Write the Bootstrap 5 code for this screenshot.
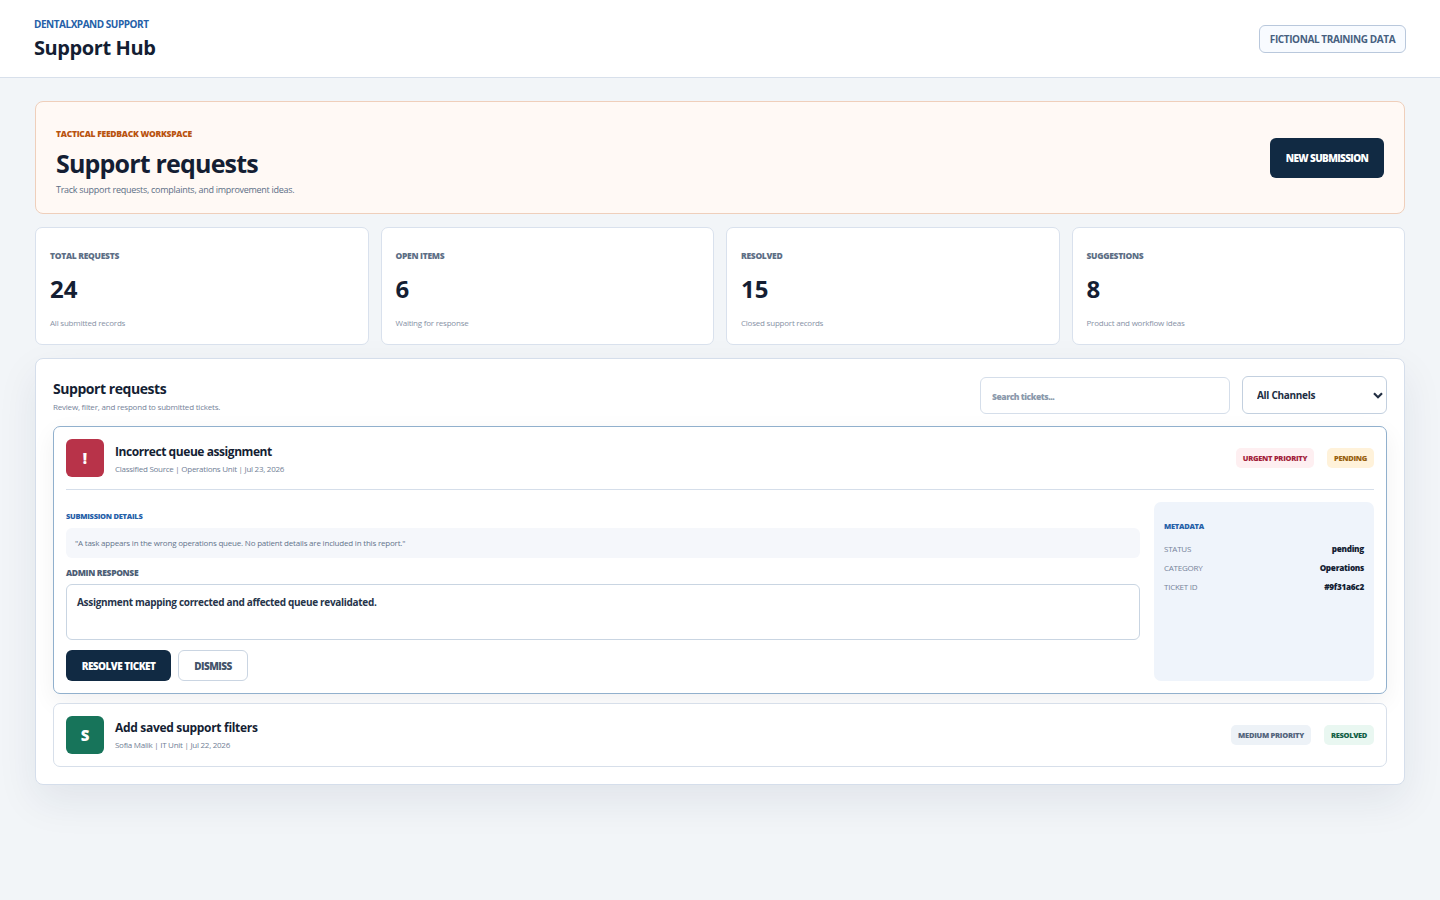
<!DOCTYPE html>
<html lang="en">
<head>
<meta charset="utf-8">
<meta name="viewport" content="width=device-width, initial-scale=1">
<title>Support Hub</title>
<link href="https://cdn.jsdelivr.net/npm/bootstrap@5.3.0/dist/css/bootstrap.min.css" rel="stylesheet">
<style>
body{font-family:"Open Sans","Noto Sans",sans-serif;background:#f2f5f8;color:#141e33;min-height:100vh;font-size:8px;line-height:12px}
h1,h2,h3,p{margin:0;white-space:nowrap}
.topbar{height:78px;background:#fff;border-bottom:1px solid #d8e0eb;padding:17px 34px 0}
.brand-kicker{font-size:10px;line-height:14px;font-weight:700;letter-spacing:-.047em;color:#2560a8}
.brand-title{font-size:20px;line-height:28px;font-weight:700;letter-spacing:-.02em;margin-top:3px}
.pill{margin-top:8px;width:147px;height:28px;line-height:27px;border:1px solid #b9c8dc;border-radius:6px;background:#f8fbff;color:#476080;font-size:10px;font-weight:700;letter-spacing:-.04em;white-space:nowrap;text-align:center}
.workspace{padding:23px 35px 0}
.hero{height:113px;background:#fff9f5;border:1px solid #efcfbb;border-radius:8px;padding:0 20px}
.hero-copy{padding-top:26px}
.hero-kicker{font-size:8.5px;font-weight:800;letter-spacing:-.031em;color:#b9530f}
.hero h1{font-size:25px;line-height:32px;font-weight:700;letter-spacing:-.0325em;margin-top:7px}
.hero-sub{font-size:9px;line-height:14px;letter-spacing:-.031em;color:#5c6e85;margin-top:4px}
.act{display:inline-flex;align-items:center;justify-content:center;padding:0;border-radius:6px;font-size:10px;line-height:14px;font-weight:800;letter-spacing:-.052em;white-space:nowrap}
.act-dark,.act-dark:hover{background:#112a43;color:#fff}
.act-new{width:114px;height:40px;letter-spacing:-.0635em;margin-top:1px}
.act-resolve{width:105px;height:31px}
.act-dismiss,.act-dismiss:hover{width:70px;height:31px;background:#fff;border:1px solid #cad5e2;color:#44546a;letter-spacing:-.055em}
.stats{display:grid;grid-template-columns:repeat(4,1fr);gap:12px;margin-top:13px}
.stat{height:118px;background:#fff;border:1px solid #d9e1ed;border-radius:7px;padding:22px 14px 0}
.stat-label{font-size:8.5px;font-weight:800;letter-spacing:-.036em;color:#5c6e85}
.stat-num{font-size:24px;line-height:30px;font-weight:700;margin-top:12px}
.stat-sub{letter-spacing:-.0275em;color:#8792a6;margin-top:13px}
.panel{margin-top:13px;background:#fff;border:1px solid #d5deeb;border-radius:8px;padding:17px;box-shadow:0 16px 40px rgba(30,41,75,.08)}
.panel-head{height:38px;margin-bottom:12px;gap:12px}
.panel h2{font-size:14px;line-height:20px;font-weight:700;letter-spacing:-.032em;margin-top:3px}
.panel-sub{letter-spacing:-.026em;color:#76839a;margin-top:2px}
.controls{gap:12px}
.search{width:250px;height:37px;margin-top:1px;border:1px solid #d5deea;border-radius:6px;padding:2px 11px 0;font-size:8.5px;line-height:14px;font-weight:800;letter-spacing:-.052em;background:#fff}
.search::placeholder{color:#8b99ac;opacity:1}
.channels{width:145px;height:38px;border:1px solid #c3d0df;border-radius:6px;padding:0 14px;font-size:10px;line-height:14px;font-weight:700;letter-spacing:-.03em;color:#202e43;background:#fff url("data:image/svg+xml,%3Csvg xmlns='http://www.w3.org/2000/svg' viewBox='0 0 10 7'%3E%3Cpath d='M1 1.2l4 4 4-4' fill='none' stroke='%23243044' stroke-width='2.2'/%3E%3C/svg%3E") no-repeat right 3px top 15px/10px 7px}
.ticket{background:#fff;border:1px solid #d7dfea;border-radius:7px;padding:12px}
.ticket + .ticket{margin-top:9px}
.ticket-open{border-color:#91b0cd;box-shadow:0 8px 24px rgba(15,23,42,.06)}
.avatar{width:38px;height:38px;line-height:39px;border-radius:6px;color:#fff;font-size:15px;font-weight:800;text-align:center;margin-right:11px}
.red{background:#b83349}
.green{background:#17745a}
.ticket h3{font-size:12px;line-height:18px;font-weight:700;letter-spacing:-.036em;padding-top:4px}
.ticket-meta{letter-spacing:-.033em;color:#718096;margin-top:2px}
.ticket:not(.ticket-open) h3{padding-top:3px;letter-spacing:-.026em}
.chip{height:20px;line-height:20px;border-radius:5px;font-size:7.5px;font-weight:800;letter-spacing:-.036em;text-align:center;white-space:nowrap}
.chip-urgent{width:78px;background:#feeff1;color:#a31f3c}
.chip-pending{width:47px;background:#fff2da;color:#99610f}
.chip-medium{width:80px;background:#edf2f7;color:#53647c}
.chip-done{width:50px;background:#e9f7f1;color:#126046;letter-spacing:-.045em}
.ticket-body{border-top:1px solid #d5deea;margin-top:12px;padding-top:12px;gap:14px}
.kicker{font-size:7.5px;font-weight:800;letter-spacing:-.035em;color:#2560a8}
.quote{height:30px;line-height:30px;margin-top:6px;background:#f5f7fb;border-radius:6px;padding-left:9px;letter-spacing:-.025em;color:#64748b}
.field-label{display:block;font-size:8.5px;font-weight:800;letter-spacing:-.04em;color:#4c5d74;margin-top:9px}
.reply{display:block;width:100%;height:56px;margin-top:5px;border:1px solid #c9d5e2;border-radius:6px;padding:10px;font-size:10px;line-height:14px;font-weight:700;letter-spacing:-.0307em;color:#26344a;resize:none}
.reply-actions{gap:7px;margin-top:10px}
.facts{width:220px;background:#eff4fb;border-radius:7px;padding:18px 10px 0}
.facts dl{margin:7px 0 0;line-height:19px}
.facts dt{font-weight:400;letter-spacing:-.03em;color:#76839a}
.facts dd{margin:0;font-size:8.2px;font-weight:800;letter-spacing:-.034em}
.chips{gap:13px}
</style>
</head>
<body>
<header class="topbar d-flex justify-content-between align-items-start">
  <div>
    <p class="brand-kicker">DENTALXPAND SUPPORT</p>
    <p class="brand-title">Support Hub</p>
  </div>
  <span class="pill">FICTIONAL TRAINING DATA</span>
</header>
<main class="workspace">
  <section class="hero d-flex justify-content-between">
    <div class="hero-copy">
      <p class="hero-kicker">TACTICAL FEEDBACK WORKSPACE</p>
      <h1>Support requests</h1>
      <p class="hero-sub">Track support requests, complaints, and improvement ideas.</p>
    </div>
    <button type="button" class="btn act act-dark act-new border-0 align-self-center">NEW SUBMISSION</button>
  </section>
  <section class="stats">
    <div class="stat"><p class="stat-label">TOTAL REQUESTS</p><p class="stat-num">24</p><p class="stat-sub">All submitted records</p></div>
    <div class="stat"><p class="stat-label">OPEN ITEMS</p><p class="stat-num">6</p><p class="stat-sub">Waiting for response</p></div>
    <div class="stat"><p class="stat-label">RESOLVED</p><p class="stat-num">15</p><p class="stat-sub">Closed support records</p></div>
    <div class="stat"><p class="stat-label">SUGGESTIONS</p><p class="stat-num">8</p><p class="stat-sub">Product and workflow ideas</p></div>
  </section>
  <section class="panel">
    <div class="panel-head d-flex justify-content-between">
      <div>
        <h2>Support requests</h2>
        <p class="panel-sub">Review, filter, and respond to submitted tickets.</p>
      </div>
      <div class="controls d-flex align-items-start">
        <input class="form-control search" type="text" placeholder="Search tickets..." aria-label="Search tickets">
        <select class="form-select channels" aria-label="Channel"><option>All Channels</option></select>
      </div>
    </div>
    <article class="ticket ticket-open">
      <div class="d-flex">
        <div class="avatar red">!</div>
        <div class="flex-grow-1">
          <h3>Incorrect queue assignment</h3>
          <p class="ticket-meta">Classified Source | Operations Unit | Jul 23, 2026</p>
        </div>
        <div class="chips d-flex align-self-center">
          <span class="chip chip-urgent">URGENT PRIORITY</span>
          <span class="chip chip-pending">PENDING</span>
        </div>
      </div>
      <div class="ticket-body d-flex">
        <div class="flex-grow-1 pt-2">
          <p class="kicker">SUBMISSION DETAILS</p>
          <p class="quote">"A task appears in the wrong operations queue. No patient details are included in this report."</p>
          <label class="field-label" for="reply">ADMIN RESPONSE</label>
          <textarea class="reply" id="reply">Assignment mapping corrected and affected queue revalidated.</textarea>
          <div class="reply-actions d-flex">
            <button type="button" class="btn act act-dark act-resolve border-0">RESOLVE TICKET</button>
            <button type="button" class="btn act act-dismiss">DISMISS</button>
          </div>
        </div>
        <aside class="facts flex-shrink-0">
          <p class="kicker">METADATA</p>
          <dl>
            <div class="d-flex justify-content-between"><dt>STATUS</dt><dd>pending</dd></div>
            <div class="d-flex justify-content-between"><dt>CATEGORY</dt><dd>Operations</dd></div>
            <div class="d-flex justify-content-between"><dt>TICKET ID</dt><dd>#9f31a6c2</dd></div>
          </dl>
        </aside>
      </div>
    </article>
    <article class="ticket">
      <div class="d-flex">
        <div class="avatar green">S</div>
        <div class="flex-grow-1">
          <h3>Add saved support filters</h3>
          <p class="ticket-meta">Sofia Malik | IT Unit | Jul 22, 2026</p>
        </div>
        <div class="chips d-flex align-self-center">
          <span class="chip chip-medium">MEDIUM PRIORITY</span>
          <span class="chip chip-done">RESOLVED</span>
        </div>
      </div>
    </article>
  </section>
</main>
<script src="https://cdn.jsdelivr.net/npm/bootstrap@5.3.0/dist/js/bootstrap.bundle.min.js"></script>
</body>
</html>
